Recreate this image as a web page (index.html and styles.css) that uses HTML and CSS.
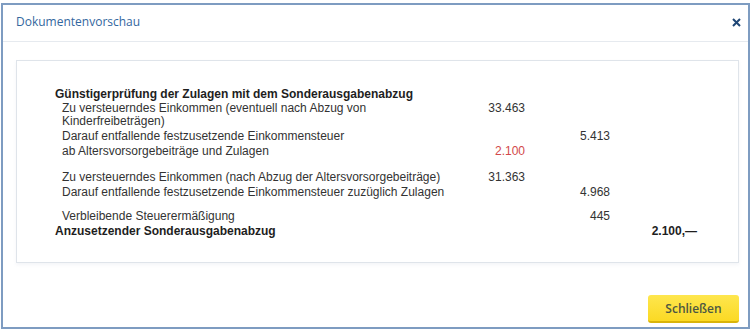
FILE: index.html
```html
<!DOCTYPE html>
<html lang="de">
<head>
  <meta charset="UTF-8" />
  <meta name="viewport" content="width=device-width, initial-scale=1.0"/>
  <title>Dokumentenvorschau</title>
  <link rel="stylesheet" href="styles.css">
</head>
<body>
  <div class="dialog">
    <div class="dialog-header">
      <span class="dialog-title">Dokumentenvorschau</span>
      <button class="close" aria-label="Schließen">
        <svg width="9" height="9" viewBox="0 0 9 9">
          <path d="M1 1 L8 8 M8 1 L1 8" stroke="#1f4675" stroke-width="2" fill="none"/>
        </svg>
      </button>
    </div>

    <div class="preview">
      <div class="heading">Günstigerprüfung der Zulagen mit dem Sonderausgabenabzug</div>

      <div class="row">
        <div class="label">Zu versteuerndes Einkommen (eventuell nach Abzug von Kinderfreibeträgen)</div>
        <div class="num">33.463</div>
        <div class="num"></div>
        <div class="num"></div>
      </div>
      <div class="row">
        <div class="label wide">Darauf entfallende festzusetzende Einkommensteuer</div>
        <div class="num">5.413</div>
        <div class="num"></div>
      </div>
      <div class="row">
        <div class="label">ab Altersvorsorgebeiträge und Zulagen</div>
        <div class="num red">2.100</div>
        <div class="num"></div>
        <div class="num"></div>
      </div>

      <div class="row group group-lg">
        <div class="label">Zu versteuerndes Einkommen (nach Abzug der Altersvorsorgebeiträge)</div>
        <div class="num">31.363</div>
        <div class="num"></div>
        <div class="num"></div>
      </div>
      <div class="row">
        <div class="label wide">Darauf entfallende festzusetzende Einkommensteuer zuzüglich Zulagen</div>
        <div class="num">4.968</div>
        <div class="num"></div>
      </div>

      <div class="row group">
        <div class="label wide">Verbleibende Steuerermäßigung</div>
        <div class="num">445</div>
        <div class="num"></div>
      </div>
      <div class="row total">
        <div class="label">Anzusetzender Sonderausgabenabzug</div>
        <div class="num"></div>
        <div class="num"></div>
        <div class="num">2.100,—</div>
      </div>
    </div>

    <div class="dialog-footer">
      <button class="btn-yellow">Schließen</button>
    </div>
  </div>
</body>
</html>
```

FILE: styles.css
```css
html, body {
  margin: 0;
  height: 100%;
  background: #fff;
}

body {
  box-sizing: border-box;
  padding: 3px 5px 3px 1px;
  font-family: "Liberation Sans", Arial, sans-serif;
}

.dialog {
  box-sizing: border-box;
  width: 749px;
  height: 326px;
  border: 2px solid #7e9cc1;
  background: #fff;
  display: flex;
  flex-direction: column;
}

.dialog-header {
  height: 37px;
  box-sizing: border-box;
  padding: 9px 7px 0 13px;
  border-bottom: 1px solid #e6eaef;
  display: flex;
  justify-content: space-between;
  align-items: flex-start;
}

.dialog-title {
  font-family: "Open Sans", sans-serif;
  font-size: 12px;
  line-height: 15px;
  color: #33679e;
}

.close {
  border: 0;
  background: none;
  padding: 0;
  margin-top: 4px;
  width: 9px;
  height: 9px;
  display: flex;
}

.preview {
  box-sizing: border-box;
  height: 203px;
  margin: 18px 9px 0 13px;
  padding: 26px 0 0 38px;
  border: 1px solid #dfe4ea;
  box-shadow: 0 2px 3px rgba(180, 190, 205, 0.15);
  color: #333;
  font-size: 12px;
}

.heading {
  font-weight: bold;
  line-height: 14px;
  color: #1e1e1e;
}

.row {
  display: grid;
  grid-template-columns: 387px 83px 85px 87px;
  line-height: 13px;
  padding: 1px 0;
}

.row .label {
  padding-left: 7px;
}

.row .label.wide {
  grid-column: span 2;
}

.row.group {
  margin-top: 9px;
}

.row.group-lg {
  margin-top: 11px;
}

.row.total {
  font-weight: bold;
  color: #1e1e1e;
}

.row.total .label {
  padding-left: 0;
}

.num {
  text-align: right;
}

.red {
  color: #d2484a;
}

.dialog-footer {
  margin-top: auto;
  padding: 0 9px 4px 0;
  display: flex;
  justify-content: flex-end;
}

.btn-yellow {
  width: 91px;
  height: 28px;
  border: 0;
  border-bottom: 2px solid #d9b40a;
  border-radius: 3px;
  background: linear-gradient(#fee64e, #fbd924);
  font-family: "Open Sans", sans-serif;
  font-weight: 600;
  font-size: 12px;
  color: #4c5742;
  padding: 0;
}
```
